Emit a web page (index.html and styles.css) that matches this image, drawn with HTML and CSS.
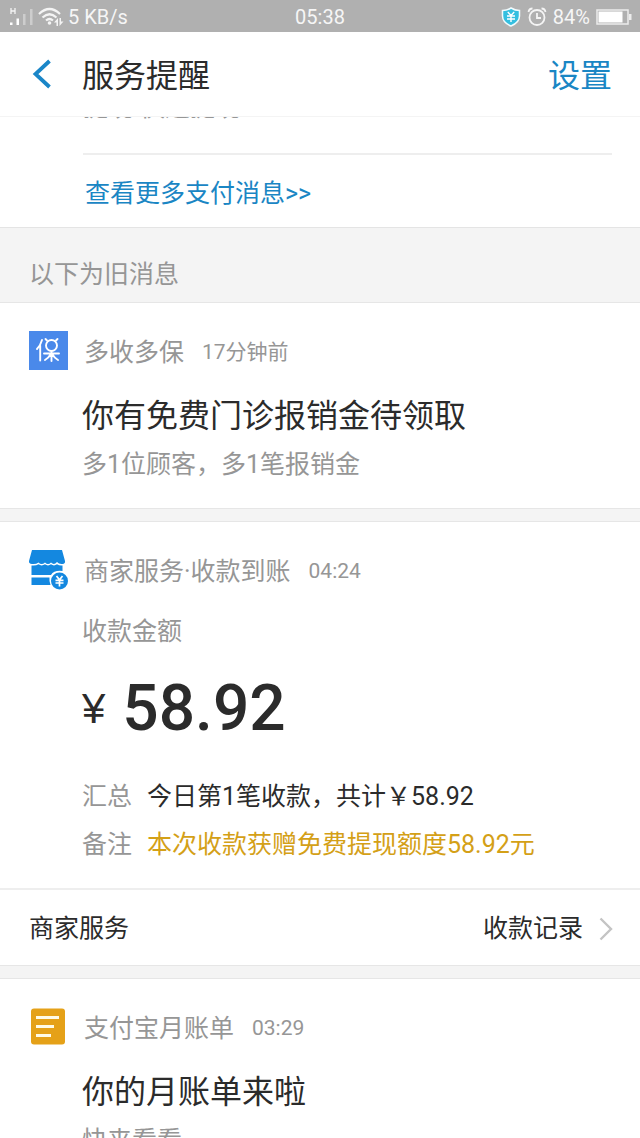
FILE: index.html
```html
<!DOCTYPE html>
<html lang="zh-CN">
<head>
<meta charset="utf-8">
<meta name="viewport" content="width=device-width, initial-scale=1">
<title>服务提醒</title>
<link rel="stylesheet" href="styles.css">
</head>
<body>
<div class="status">
  <div class="status-left">
    <svg class="signal" width="26" height="20" viewBox="0 0 26 20" aria-hidden="true">
      <path d="M3 1v6M7 1v6M3 4h4" stroke="#f4f4f4" stroke-width="1.300" fill="none"/>
      <path d="M2 15.500h2.500v2.500H2zM8.500 11.500H11v6.500H8.500z" fill="#fff"/>
      <path d="M15 7h2.500v11H15zM22 2h2.500v16H22z" fill="#cdcdcd"/>
    </svg>
    <svg class="wifi" width="26" height="20" viewBox="0 0 26 20" aria-hidden="true">
      <g fill="none" stroke="#f4f4f4" stroke-width="2.200">
        <path d="M1 7Q11.500-3 22 7M4.500 10.500Q11.500 4 18.500 10.500M8 13.500Q11.500 10.500 15 13.500"/>
      </g>
      <circle cx="11.500" cy="16" r="1.800" fill="#f4f4f4"/>
      <path d="M16 15.500l4-4.500v8h-1.500v-3.500zM25.500 14.500l-4 4.500V11H23v3.500z" fill="#f4f4f4"/>
    </svg>
    <span>5 KB/s</span>
  </div>
  <span class="clock">05:38</span>
  <div class="status-right">
    <svg width="20" height="20" viewBox="0 0 20 20" aria-hidden="true">
      <path d="M10 1Q14 3.500 18.500 3.500V9q0 6.500-8.500 10Q1.500 15.500 1.500 9V3.500Q6 3.500 10 1z" fill="#35bfe0" stroke="#f2fbfd" stroke-width="1.500"/>
      <path d="M6.800 5L10 8.500l3.200-3.500M6 9h8M6 12h8M10 8.500v6.500" fill="none" stroke="#fff" stroke-width="1.400"/>
    </svg>
    <svg width="20" height="20" viewBox="0 0 20 20" aria-hidden="true">
      <g fill="none" stroke="#f4f4f4" stroke-width="1.800">
        <circle cx="10" cy="10.500" r="7.500"/>
        <path d="M10 6V11h4M1.500 5Q2 1.500 5.500 1.500M14.500 1.500Q18 1.500 18.500 5"/>
      </g>
    </svg>
    <span>84%</span>
    <svg width="36" height="16" viewBox="0 0 36 16" aria-hidden="true">
      <rect x="1" y="1" width="31" height="14" fill="none" stroke="#ececec" stroke-width="1.500"/>
      <rect x="2.500" y="2.500" width="24" height="11" fill="#fff"/>
      <rect x="33" y="5" width="2.500" height="6" fill="#ececec"/>
    </svg>
  </div>
</div>

<header class="topbar">
  <button class="back" type="button" aria-label="返回">
    <svg width="20" height="30" viewBox="0 0 20 30" aria-hidden="true">
      <path d="M17.500 2L3.500 15l14 13" fill="none" stroke="#1a86c8" stroke-width="3.800"/>
    </svg>
  </button>
  <h1 class="title">服务提醒</h1>
  <a class="settings" href="#settings">设置</a>
</header>

<main class="feed">
  <section class="older-card">
    <p class="cut-line">提现-快速提现</p>
    <a class="more" href="#more">查看更多支付消息&gt;&gt;</a>
  </section>

  <h2 class="divider-label">以下为旧消息</h2>

  <article class="card">
    <div class="card-head">
      <svg class="icon" width="40" height="40" viewBox="0 0 40 40" aria-hidden="true">
        <rect x="1" y="0" width="39" height="39" fill="#4a89ea"/>
        <g fill="none" stroke="#fff" stroke-width="1.900" stroke-linecap="round">
          <path d="M14 9Q12.500 14.500 9 18M12.200 14.500V29.500"/>
          <circle cx="23.500" cy="14.500" r="5.500"/>
          <path d="M19 9.500l-1.500-1.500M28 9.500l1.500-1.500M16 22.500h15M23.500 20.500v9.500M22.500 23.500Q20.500 27 17 29M24.500 23.500Q26.500 27 30 29"/>
        </g>
      </svg>
      <span class="name">多收多保</span>
      <time class="time">17分钟前</time>
    </div>
    <div class="card-body">
      <h3 class="headline">你有免费门诊报销金待领取</h3>
      <p class="detail">多1位顾客，多1笔报销金</p>
    </div>
  </article>

  <article class="card">
    <div class="card-head">
      <svg class="icon" width="40" height="40" viewBox="0 0 40 40" aria-hidden="true">
        <path d="M4 0H34L37 11Q37.500 13.500 34.500 14Q31 14.500 29 12Q26 15.500 23 12.500Q20 15.500 17 12.500Q13.500 15.500 10.500 12.500Q8 14.500 4 14Q.500 13.500 1 11z" fill="#1488e0"/>
        <path d="M3.500 15.500Q8 16 10.500 14.300Q13.500 16.500 17 14.300Q20 16.500 23 14.300Q26 16.500 29 14.300Q31.500 16 34.500 15.500V21Q26 20 23 25H3.500z" fill="#1488e0"/>
        <path d="M3.500 27.500H21.500Q21 31 22.500 35H3.500z" fill="#1488e0"/>
        <circle cx="31.500" cy="31" r="8.500" fill="#1488e0"/>
        <path d="M28.500 26l3 3.800 3-3.800M27.500 30.300h8M27.500 33h8M31.500 30v6.500" fill="none" stroke="#fff" stroke-width="1.700"/>
      </svg>
      <span class="name">商家服务·收款到账</span>
      <time class="time">04:24</time>
    </div>
    <div class="card-body">
      <p class="amount-label">收款金额</p>
      <p class="amount"><span class="currency">¥</span><strong class="sum">58.92</strong></p>
      <dl class="facts">
        <dt>汇总</dt><dd>今日第1笔收款，共计￥58.92</dd>
        <dt>备注</dt><dd class="bonus">本次收款获赠免费提现额度58.92元</dd>
      </dl>
    </div>
    <a class="card-foot" href="#records">
      <span>商家服务</span>
      <span class="records">收款记录
        <svg width="14" height="24" viewBox="0 0 14 24" aria-hidden="true">
          <path d="M1.500 1.500L12 12 1.500 22.500" fill="none" stroke="#c4c4c4" stroke-width="2.400"/>
        </svg>
      </span>
    </a>
  </article>

  <article class="card">
    <div class="card-head">
      <svg class="icon" width="40" height="40" viewBox="0 0 40 40" aria-hidden="true">
        <rect x="3" y="1.500" width="34" height="36" rx="3" fill="#e5a118"/>
        <path d="M8 10.500H31M8 19.500H26M8 28.500H23" stroke="#fffbe6" stroke-width="3.200"/>
      </svg>
      <span class="name">支付宝月账单</span>
      <time class="time">03:29</time>
    </div>
    <div class="card-body">
      <h3 class="headline">你的月账单来啦</h3>
      <p class="detail">快来看看</p>
    </div>
  </article>
</main>
</body>
</html>
```
FILE: styles.css
```css
* {
  box-sizing: border-box;
}

body,
h1,
h2,
h3,
p,
dl,
dd {
  margin: 0;
  font-weight: 400;
}

body {
  display: flex;
  flex-direction: column;
  height: 100vh;
  overflow: hidden;
  background: #f4f4f4;
  color: #2b2b2b;
  font-family: Roboto, "Noto Sans CJK SC", sans-serif;
  font-size: 25px;
  line-height: 36px;
}

a {
  color: inherit;
  text-decoration: none;
}

svg {
  flex: none;
  display: block;
}

.status {
  flex: none;
  display: grid;
  grid-template-columns: 1fr auto 1fr;
  align-items: center;
  height: 32px;
  padding: 1px 8px 0;
  background: #b0b0b0;
  color: #f6f6f6;
  font-size: 20px;
  line-height: 30px;
}

.status-left,
.status-right {
  display: flex;
  align-items: center;
  gap: 6px;
}

.status-left {
  gap: 4px;
}

.status-right {
  justify-content: flex-end;
}

.topbar {
  flex: none;
  display: flex;
  align-items: center;
  height: 85px;
  padding: 0 28px;
  background: #fff;
  border-bottom: 1px solid #f4f4f4;
  font-size: 32px;
}

.back {
  width: 54px;
  padding: 0 0 0 4px;
  border: 0;
  background: none;
}

.title {
  flex: 1;
  font-size: 32px;
}

.title,
.settings {
  padding-top: 4px;
}

.settings,
.more {
  color: #1a86c4;
}

.feed {
  flex: 1;
  min-height: 0;
  overflow: hidden;
}

.older-card {
  margin-top: -27px;
  padding: 0 28px 15px 83px;
  background: #fff;
}

.cut-line {
  padding-bottom: 27px;
  border-bottom: 2px solid #eee;
  color: #969696;
}

.more {
  display: block;
  padding: 21px 0 0 2px;
}

.divider-label {
  padding: 29px 29px 9px;
  border-top: 1px solid #e4e4e4;
  color: #969696;
  font-size: 25px;
}

.card {
  margin-bottom: 12px;
  padding-top: 28px;
  border: 1px solid #e6e6e6;
  border-width: 1px 0;
  background: #fff;
}

.card-head {
  display: flex;
  align-items: center;
  height: 40px;
  padding: 0 28px;
  color: #969696;
}

.name {
  margin: 0 18px 0 16px;
  padding-top: 3px;
}

.time {
  padding-top: 1px;
  font-size: 21px;
}

.card-body {
  padding: 21px 28px 25px 82px;
}

.headline {
  margin-bottom: 7px;
  font-size: 32px;
  line-height: 48px;
}

.detail,
.amount-label {
  color: #969696;
}

.amount-label {
  padding-top: 3px;
}

.amount {
  display: flex;
  align-items: center;
  gap: 17px;
  margin: 19px 0 30px;
  line-height: 80px;
}

.currency {
  font-family: "Liberation Sans", sans-serif;
  font-size: 42px;
}

.sum {
  font-size: 64px;
  font-weight: 500;
}

.facts {
  display: grid;
  grid-template-columns: auto 1fr;
  gap: 12px 15px;
}

.facts dt {
  color: #969696;
}

.facts .bonus {
  color: #d4a017;
}

.card-foot {
  display: flex;
  align-items: center;
  justify-content: space-between;
  height: 77px;
  padding: 2px 27px 0 29px;
  border-top: 2px solid #eee;
}

.records {
  display: flex;
  align-items: center;
  gap: 16px;
}
```
